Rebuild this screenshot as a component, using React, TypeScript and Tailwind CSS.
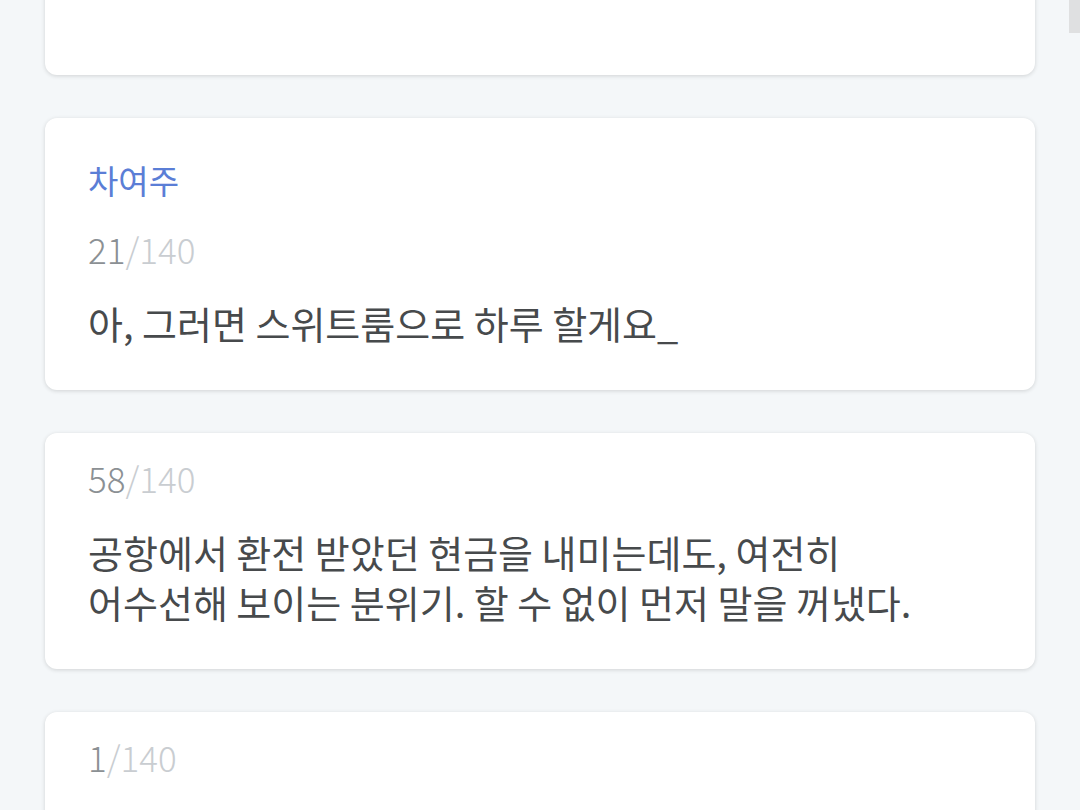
const font = { fontFamily: '"Noto Sans CJK KR", "Noto Sans", sans-serif' };

type Entry = {
  name?: string;
  count: number;
  lines: string[];
};

const entries: Entry[] = [
  {
    name: "차여주",
    count: 21,
    lines: ["아, 그러면 스위트룸으로 하루 할게요_"],
  },
  {
    count: 58,
    lines: [
      "공항에서 환전 받았던 현금을 내미는데도, 여전히",
      "어수선해 보이는 분위기. 할 수 없이 먼저 말을 꺼냈다.",
    ],
  },
  {
    count: 1,
    lines: [""],
  },
];

function Card({ entry }: { entry: Entry }) {
  return (
    <div className="bg-white rounded-[12px] shadow-[0_1px_4px_rgba(0,0,0,0.15)] px-[43px] pt-[25px] pb-[42px]">
      {entry.name && (
        <div className="text-[33px] leading-[40px] text-[#5b7ed6] mt-[17px] mb-[29px]">
          {entry.name}
        </div>
      )}
      <div className="text-[35px] leading-[40px] font-light">
        <span className="text-[#8b9094]">{entry.count}</span>
        <span className="text-[#c9cdd1]">/140</span>
      </div>
      <div className="mt-[29px] text-[38px] leading-[50px] text-[#474a4c]">
        {entry.lines.map((l, i) => (
          <div key={i} className="min-h-[50px]">
            {l}
          </div>
        ))}
      </div>
    </div>
  );
}

export default function App() {
  return (
    <div
      className="relative h-[810px] w-[1080px] overflow-hidden bg-[#f4f7f9]"
      style={font}
    >
      <div className="flex flex-col gap-[43px] px-[45px]">
        <div className="-mt-[125px] h-[200px] bg-white rounded-[12px] shadow-[0_1px_4px_rgba(0,0,0,0.15)]" />
        {entries.map((e, i) => (
          <Card key={i} entry={e} />
        ))}
      </div>
      <div className="absolute right-0 top-0 h-[33px] w-[11px] bg-[#dfe0e1]" />
    </div>
  );
}
